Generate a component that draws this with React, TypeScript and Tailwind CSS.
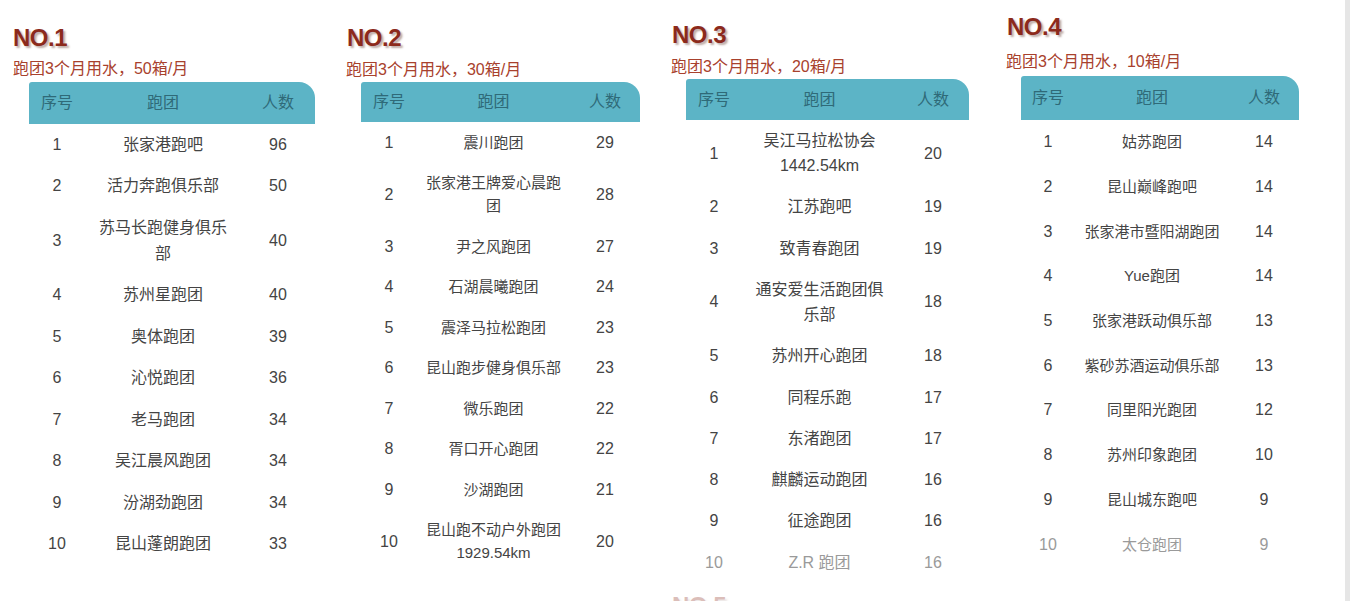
import React from 'react';

type Row = [string, string, string];

interface Board {
  no: string;
  note: string;
  wrap: string;
  title: string;
  sub: string;
  table: string;
  cols: string;
  head: string;
  font: string;
  cell: string;
  rows: Row[];
}

const boards: Board[] = [
  {
    no: 'NO.1',
    note: '跑团3个月用水，50箱/月',
    wrap: 'w-[333px] ml-[13px] pt-[24px]',
    title: '',
    sub: 'mt-[7px]',
    table: 'mt-[3px] ml-[16px] w-[286px]',
    cols: 'grid-cols-[56px_156px_74px]',
    head: 'h-[42px]',
    font: 'text-[16px]',
    cell: 'py-[7.75px] leading-[26px]',
    rows: [
      ['1', '张家港跑吧', '96'],
      ['2', '活力奔跑俱乐部', '50'],
      ['3', '苏马长跑健身俱乐部', '40'],
      ['4', '苏州星跑团', '40'],
      ['5', '奥体跑团', '39'],
      ['6', '沁悦跑团', '36'],
      ['7', '老马跑团', '34'],
      ['8', '吴江晨风跑团', '34'],
      ['9', '汾湖劲跑团', '34'],
      ['10', '昆山蓬朗跑团', '33'],
    ],
  },
  {
    no: 'NO.2',
    note: '跑团3个月用水，30箱/月',
    wrap: 'w-[325px] pt-[24px]',
    title: 'ml-[1px]',
    sub: 'mt-[8px]',
    table: 'mt-[2px] ml-[15px] w-[279px]',
    cols: 'grid-cols-[56px_153px_70px]',
    head: 'h-[40px]',
    font: 'text-[15px]',
    cell: 'py-[8.75px] leading-[23px]',
    rows: [
      ['1', '震川跑团', '29'],
      ['2', '张家港王牌爱心晨跑团', '28'],
      ['3', '尹之风跑团', '27'],
      ['4', '石湖晨曦跑团', '24'],
      ['5', '震泽马拉松跑团', '23'],
      ['6', '昆山跑步健身俱乐部', '23'],
      ['7', '微乐跑团', '22'],
      ['8', '胥口开心跑团', '22'],
      ['9', '沙湖跑团', '21'],
      ['10', '昆山跑不动户外跑团 1929.54km', '20'],
    ],
  },
  {
    no: 'NO.3',
    note: '跑团3个月用水，20箱/月',
    wrap: 'w-[335px] pt-[21px]',
    title: 'ml-[1px]',
    sub: 'mt-[8px]',
    table: 'mt-[2px] ml-[15px] w-[283px]',
    cols: 'grid-cols-[56px_155px_72px]',
    head: 'h-[41px]',
    font: 'text-[16px]',
    cell: 'py-[8.15px] leading-[25px]',
    rows: [
      ['1', '吴江马拉松协会 1442.54km', '20'],
      ['2', '江苏跑吧', '19'],
      ['3', '致青春跑团', '19'],
      ['4', '通安爱生活跑团俱乐部', '18'],
      ['5', '苏州开心跑团', '18'],
      ['6', '同程乐跑', '17'],
      ['7', '东渚跑团', '17'],
      ['8', '麒麟运动跑团', '16'],
      ['9', '征途跑团', '16'],
      ['10', 'Z.R 跑团', '16'],
    ],
  },
  {
    no: 'NO.4',
    note: '跑团3个月用水，10箱/月',
    wrap: 'flex-1 pt-[13px]',
    title: 'ml-[1px]',
    sub: 'mt-[11px]',
    table: 'mt-[4px] ml-[15px] w-[278px]',
    cols: 'grid-cols-[54px_154px_70px]',
    head: 'h-[44px]',
    font: 'text-[15px]',
    cell: 'py-[10.35px] leading-[24px]',
    rows: [
      ['1', '姑苏跑团', '14'],
      ['2', '昆山巅峰跑吧', '14'],
      ['3', '张家港市暨阳湖跑团', '14'],
      ['4', 'Yue跑团', '14'],
      ['5', '张家港跃动俱乐部', '13'],
      ['6', '紫砂苏酒运动俱乐部', '13'],
      ['7', '同里阳光跑团', '12'],
      ['8', '苏州印象跑团', '10'],
      ['9', '昆山城东跑吧', '9'],
      ['10', '太仓跑团', '9'],
    ],
  },
];

function Heading({ text, className }: { text: string; className?: string }) {
  return (
    <div
      className={`text-[24px] leading-[28px] font-bold tracking-[-0.5px] text-[#8c2a1c] [text-shadow:2px_2px_2px_rgba(110,70,60,0.45)] ${className ?? ''}`}
    >
      {text}
    </div>
  );
}

function RankTable({ b, faded }: { b: Board; faded: boolean }) {
  return (
    <div className={`${b.table} ${b.font}`}>
      <div
        className={`grid ${b.cols} ${b.head} items-center bg-[#5cb4c6] text-[16px] text-[#2f6a78] rounded-tl-[3px] rounded-tr-[16px]`}
      >
        <span className="text-center">序号</span>
        <span className="text-center">跑团</span>
        <span className="text-center">人数</span>
      </div>
      {b.rows.map((r, i) => {
        const dim = faded && i === b.rows.length - 1;
        return (
          <div
            key={r[0]}
            className={`grid ${b.cols} items-center text-center ${dim ? 'text-[#9a9a9a]' : 'text-[#444]'}`}
          >
            <span className={`${b.cell} text-[16px]`}>{r[0]}</span>
            <span className={`${b.cell} px-2`}>{r[1]}</span>
            <span className={`${b.cell} text-[16px]`}>{r[2]}</span>
          </div>
        );
      })}
    </div>
  );
}

export default function App() {
  return (
    <div className="flex h-[601px] overflow-hidden bg-white font-['Liberation_Sans','Noto_Sans_CJK_SC',sans-serif]">
      <div className="flex flex-1 items-start">
        {boards.map((b, i) => (
          <div key={b.no} className={b.wrap}>
            <Heading text={b.no} className={b.title} />
            <div className={`${b.sub} text-[16px] leading-[20px] text-[#a8412d]`}>{b.note}</div>
            <RankTable b={b} faded={i >= 2} />
            {i === 2 && <Heading text="NO.5" className="ml-[1px] mt-[9px] opacity-30" />}
          </div>
        ))}
      </div>
      <div className="w-[5px] bg-[#e6e6e6]" />
    </div>
  );
}
